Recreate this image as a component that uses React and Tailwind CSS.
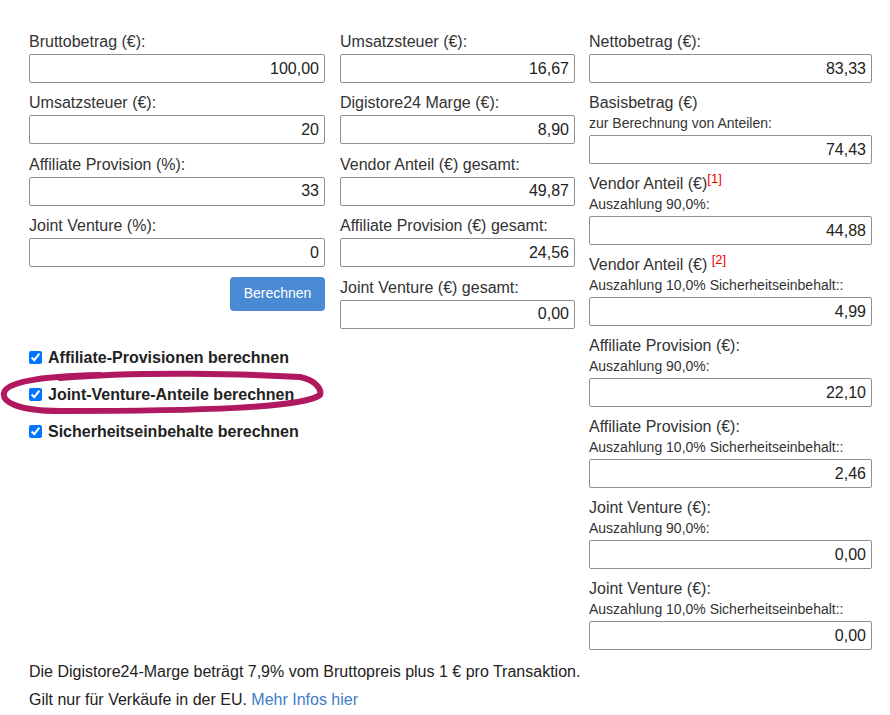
import React from 'react';

const Field = ({ label, sub, note, value, gap = 'mb-[11px]' }) => (
  <div className={gap}>
    <div className="text-[16px] leading-[18px] text-[#333]">
      {label}
      {note && <span className="relative -top-[6px] text-[13px] leading-none text-[#e00]">{note}</span>}
    </div>
    {sub && <div className="mt-[3px] text-[14px] leading-[17px] text-[#333]">{sub}</div>}
    <input
      readOnly
      value={value}
      className="mt-[3px] block w-full h-[29px] border border-[#8f8f8f] rounded-[2px] bg-white px-[5px] text-right text-[16px] text-[#222] outline-none"
    />
  </div>
);

const col1 = [
  { label: 'Bruttobetrag (€):', value: '100,00' },
  { label: 'Umsatzsteuer (€):', value: '20' },
  { label: 'Affiliate Provision (%):', value: '33' },
  { label: 'Joint Venture (%):', value: '0' },
];

const col2 = [
  { label: 'Umsatzsteuer (€):', value: '16,67' },
  { label: 'Digistore24 Marge (€):', value: '8,90' },
  { label: 'Vendor Anteil (€) gesamt:', value: '49,87' },
  { label: 'Affiliate Provision (€) gesamt:', value: '24,56' },
  { label: 'Joint Venture (€) gesamt:', value: '0,00' },
];

const col3 = [
  { label: 'Nettobetrag (€):', value: '83,33' },
  { label: 'Basisbetrag (€)', sub: 'zur Berechnung von Anteilen:', value: '74,43' },
  { label: 'Vendor Anteil (€)', note: '[1]', sub: 'Auszahlung 90,0%:', value: '44,88' },
  { label: 'Vendor Anteil (€) ', note: '[2]', sub: 'Auszahlung 10,0% Sicherheitseinbehalt::', value: '4,99' },
  { label: 'Affiliate Provision (€):', sub: 'Auszahlung 90,0%:', value: '22,10' },
  { label: 'Affiliate Provision (€):', sub: 'Auszahlung 10,0% Sicherheitseinbehalt::', value: '2,46' },
  { label: 'Joint Venture (€):', sub: 'Auszahlung 90,0%:', value: '0,00' },
  { label: 'Joint Venture (€):', sub: 'Auszahlung 10,0% Sicherheitseinbehalt::', value: '0,00' },
];

const checks = ['Affiliate-Provisionen berechnen', 'Joint-Venture-Anteile berechnen', 'Sicherheitseinbehalte berechnen'];

export default function App() {
  return (
    <div className="relative w-[890px] min-h-[715px] bg-white pl-[29px] pt-[33px] font-['Liberation_Sans',Arial,sans-serif] text-[#333]">
      <div className="flex items-start">
        {/* left column */}
        <div className="w-[296px]">
          {col1.map((f, i) => <Field key={i} gap="mb-[11.4px]" {...f} />)}
          <div className="flex justify-end -mt-[2px]">
            <button className="w-[95px] h-[34px] rounded-[4px] bg-[#4a8ad4] text-white text-[14px]">Berechnen</button>
          </div>
          <div className="mt-[37px] flex flex-col gap-[17px]">
            {checks.map((c) => (
              <label key={c} className="flex items-center h-[20px] text-[16px] font-bold text-[#222]">
                <input type="checkbox" defaultChecked className="w-[13px] h-[13px] mr-[6px] accent-[#0075ff]" />
                {c}
              </label>
            ))}
          </div>
        </div>

        {/* middle column */}
        <div className="w-[235px] ml-[15px]">
          {col2.map((f, i) => <Field key={i} gap="mb-[11.4px]" {...f} />)}
        </div>

        {/* right column */}
        <div className="w-[283px] ml-[14px]">
          {col3.map((f, i) => <Field key={i} {...f} />)}
        </div>
      </div>

      <div className="text-[16px] leading-[28px] text-[#222] -mt-[3px]">
        <p>Die Digistore24-Marge beträgt 7,9% vom Bruttopreis plus 1 € pro Transaktion.</p>
        <p>
          Gilt nur für Verkäufe in der EU. <a className="text-[#3d7cc9]">Mehr Infos hier</a>
        </p>
      </div>

      {/* hand-drawn highlight */}
      <svg className="absolute left-0 top-[366px] pointer-events-none" width="330" height="52" viewBox="0 0 330 52" fill="none">
        <path
          d="M 60 12 C 140 5, 250 8, 300 11 C 316 14, 322 24, 320 29 C 302 42, 200 45, 60 45 C 18 45, 2 36, 4 27 C 6 16, 40 10, 100 9"
          stroke="#b0185f"
          strokeWidth="6"
          strokeLinecap="round"
          strokeLinejoin="round"
        />
      </svg>
    </div>
  );
}
